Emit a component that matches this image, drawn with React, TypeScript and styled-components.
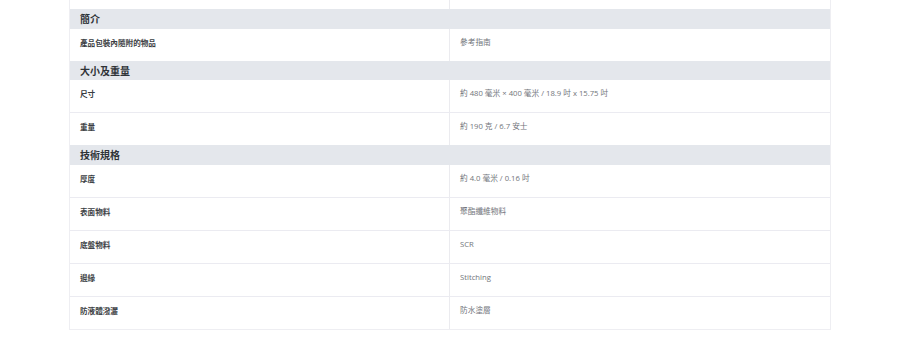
import React from "react";
import styled, { createGlobalStyle } from "styled-components";

const Global = createGlobalStyle`
  html, body { margin: 0; padding: 0; background: #ffffff; }
  body {
    font-family: "Open Sans", "Noto Sans", "Noto Sans CJK TC", sans-serif;
    -webkit-font-smoothing: antialiased;
  }
`;

const Page = styled.div`
  width: 900px;
  height: 337px;
  overflow: hidden;
  background: #ffffff;
`;

const Table = styled.div`
  width: 762px;
  margin: 0 auto;
  box-sizing: border-box;
  border-left: 1px solid #eeeef2;
  border-right: 1px solid #eeeef2;
  border-bottom: 1px solid #eeeef2;
`;

const Clip = styled.div`
  display: grid;
  grid-template-columns: 1fr 1fr;
  height: 9px;
`;

const ClipCell = styled.div<{ $first?: boolean }>`
  border-right: ${(p) => (p.$first ? "1px solid #ebebef" : "none")};
`;

const SectionHeader = styled.div`
  height: 19.5px;
  display: flex;
  align-items: center;
  padding: 0 10px;
  background: #e4e7ec;
  font-family: "Noto Sans CJK TC", "Noto Sans", sans-serif;
  font-size: 10px;
  font-weight: 700;
  color: #2f3337;
`;

const Row = styled.div<{ $last?: boolean }>`
  display: grid;
  grid-template-columns: 1fr 1fr;
  min-height: 32px;
  border-bottom: ${(p) => (p.$last ? "none" : "1px solid #ebebf1")};
`;

const Label = styled.div`
  padding: 8px 10px;
  border-right: 1px solid #ebebef;
  font-family: "Noto Sans CJK TC", "Noto Sans", sans-serif;
  font-size: 7.6px;
  line-height: 11px;
  font-weight: 700;
  color: #3a3d42;
`;

const Value = styled.div`
  padding: 8px 10px;
  font-family: "Open Sans", "Noto Sans", "Noto Sans CJK TC", sans-serif;
  font-size: 7.7px;
  line-height: 11px;
  color: #72757b;
`;

type Item = { label: string; value: string };
type Section = { title: string; items: Item[] };

const sections: Section[] = [
  { title: "簡介", items: [{ label: "產品包裝內隨附的物品", value: "參考指南" }] },
  {
    title: "大小及重量",
    items: [
      { label: "尺寸", value: "約 480 毫米 × 400 毫米 / 18.9 吋 x 15.75 吋" },
      { label: "重量", value: "約 190 克 / 6.7 安士" },
    ],
  },
  {
    title: "技術規格",
    items: [
      { label: "厚度", value: "約 4.0 毫米 / 0.16 吋" },
      { label: "表面物料", value: "聚酯纖維物料" },
      { label: "底盤物料", value: "SCR" },
      { label: "邊緣", value: "Stitching" },
      { label: "防液體潑灑", value: "防水塗層" },
    ],
  },
];

export default function App() {
  return (
    <Page>
      <Global />
      <Table>
        <Clip>
          <ClipCell $first />
          <ClipCell />
        </Clip>
        {sections.map((s) => (
          <React.Fragment key={s.title}>
            <SectionHeader>{s.title}</SectionHeader>
            {s.items.map((it, i) => (
              <Row key={it.label} $last={i === s.items.length - 1}>
                <Label>{it.label}</Label>
                <Value>{it.value}</Value>
              </Row>
            ))}
          </React.Fragment>
        ))}
      </Table>
    </Page>
  );
}
